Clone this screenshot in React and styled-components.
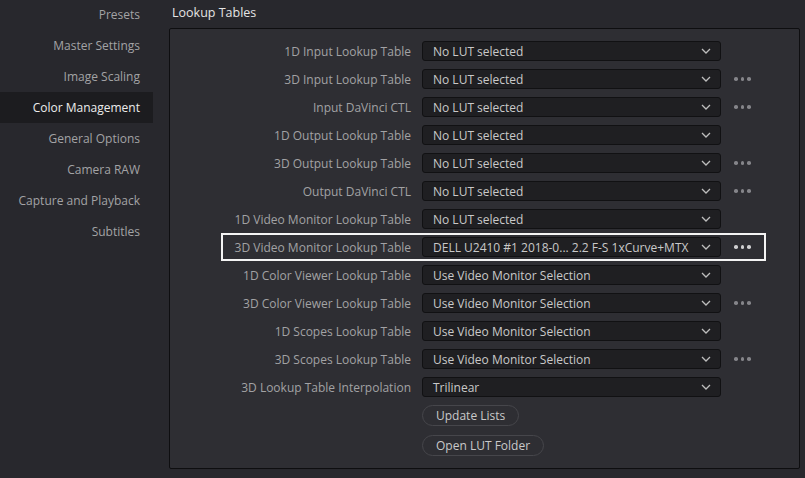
import styled, { createGlobalStyle } from 'styled-components';

const GlobalStyle = createGlobalStyle`
  html, body {
    margin: 0;
    padding: 0;
    background: #28282d;
    font-family: "Open Sans", "Noto Sans", sans-serif;
    font-size: 12px;
    overflow: hidden;
  }
`

const Page = styled.div`
  display: flex;
  width: 805px;
  height: 478px;
  background: #28282d;
`

const Sidebar = styled.nav`
  width: 153px;
  flex-shrink: 0;
  margin-top: -1px;
`

const NavItem = styled.div`
  height: 31px;
  display: flex;
  align-items: center;
  justify-content: flex-end;
  padding-right: 13px;
  color: ${p => (p.$active ? '#ececec' : '#a3a3a5')};
  background: ${p => (p.$active ? '#1c1c1f' : 'transparent')};
`

const Main = styled.div`
  flex: 1;
  display: flex;
  flex-direction: column;
  padding-left: 16px;
`

const Title = styled.div`
  height: 28px;
  line-height: 25px;
  padding-left: 3px;
  color: #e4e4e4;
  font-size: 12.5px;
`

const Panel = styled.div`
  width: 631px;
  height: 441px;
  box-sizing: border-box;
  background: #2e2e33;
  border: 1px solid #0e0e10;
  border-radius: 2px;
  padding-top: 8px;
`

const Row = styled.div`
  display: flex;
  align-items: center;
  width: 545px;
  height: 28px;
  margin-left: 51px;
  box-sizing: border-box;
  box-shadow: ${p => (p.$highlight ? 'inset 0 0 0 2px #f4f4f4' : 'none')};
`

const Label = styled.div`
  width: 190px;
  text-align: right;
  color: #a2a2a4;
  white-space: nowrap;
`

const Select = styled.div`
  margin-left: 11px;
  width: 299px;
  height: 20px;
  box-sizing: border-box;
  display: flex;
  align-items: center;
  justify-content: space-between;
  padding: 0 9px 0 10px;
  background: #1f1f22;
  border: 1px solid #111113;
  border-radius: 3px;
  color: #c9c9c9;
  white-space: nowrap;
`

const Dots = styled.div`
  margin-left: 13px;
  display: flex;
  gap: 3px;

  span {
    width: 3.5px;
    height: 3.5px;
    border-radius: 50%;
    background: ${p => (p.$light ? '#cfcfd1' : '#85858a')};
  }
`

const Buttons = styled.div`
  display: flex;
  flex-direction: column;
  align-items: flex-start;
  gap: 9px;
  margin-left: 252px;
  margin-top: 4px;
`

const Pill = styled.button`
  height: 21px;
  padding: 0 13px;
  background: #2e2e33;
  border: 1px solid #46464b;
  border-radius: 11px;
  color: #c9c9c9;
  font-family: inherit;
  font-size: 12px;
`

const Chevron = () => (
  <svg width="10" height="6" viewBox="0 0 10 6">
    <path d="M1 1 L5 5 L9 1" fill="none" stroke="#bdbdbd" strokeWidth="1.3" />
  </svg>
)

const navItems = [
  'Presets',
  'Master Settings',
  'Image Scaling',
  'Color Management',
  'General Options',
  'Camera RAW',
  'Capture and Playback',
  'Subtitles',
]

const rows = [
  ['1D Input Lookup Table', 'No LUT selected', false],
  ['3D Input Lookup Table', 'No LUT selected', true],
  ['Input DaVinci CTL', 'No LUT selected', true],
  ['1D Output Lookup Table', 'No LUT selected', false],
  ['3D Output Lookup Table', 'No LUT selected', true],
  ['Output DaVinci CTL', 'No LUT selected', true],
  ['1D Video Monitor Lookup Table', 'No LUT selected', false],
  ['3D Video Monitor Lookup Table', 'DELL U2410 #1 2018-0... 2.2 F-S 1xCurve+MTX', true],
  ['1D Color Viewer Lookup Table', 'Use Video Monitor Selection', false],
  ['3D Color Viewer Lookup Table', 'Use Video Monitor Selection', true],
  ['1D Scopes Lookup Table', 'Use Video Monitor Selection', false],
  ['3D Scopes Lookup Table', 'Use Video Monitor Selection', true],
  ['3D Lookup Table Interpolation', 'Trilinear', false],
]

const App = () => {
  return (
    <Page>
      <GlobalStyle />
      <Sidebar>
        {navItems.map(item => (
          <NavItem key={item} $active={item === 'Color Management'}>{item}</NavItem>
        ))}
      </Sidebar>
      <Main>
        <Title>Lookup Tables</Title>
        <Panel>
          {rows.map(([label, value, dots], i) => {
            const highlight = i === 7
            return (
              <Row key={label} $highlight={highlight}>
                <Label>{label}</Label>
                <Select>
                  <span>{value}</span>
                  <Chevron />
                </Select>
                {dots && (
                  <Dots $light={highlight}>
                    <span /><span /><span />
                  </Dots>
                )}
              </Row>
            )
          })}
          <Buttons>
            <Pill>Update Lists</Pill>
            <Pill>Open LUT Folder</Pill>
          </Buttons>
        </Panel>
      </Main>
    </Page>
  )
}

export default App;
